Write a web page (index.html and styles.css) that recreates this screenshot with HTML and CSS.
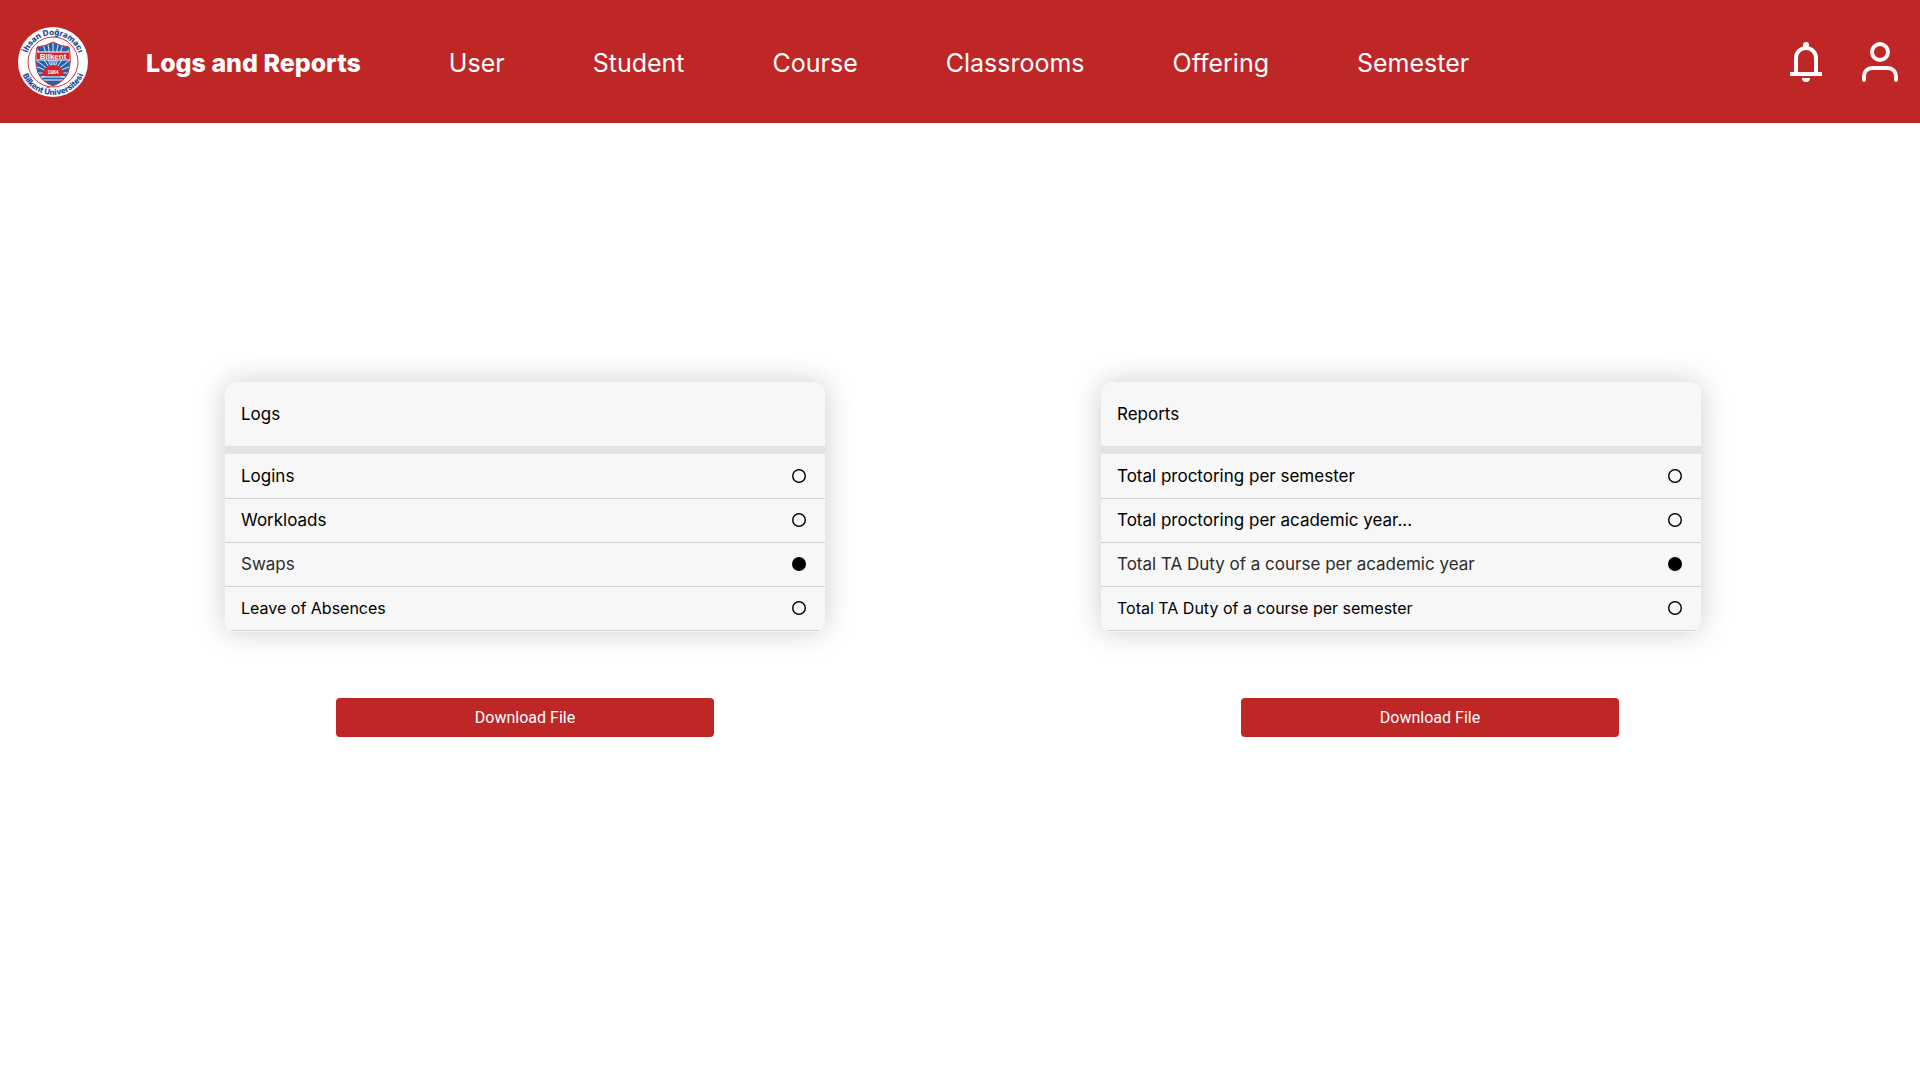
FILE: index.html
```html
<!DOCTYPE html>
<html lang="en">
<head>
<meta charset="utf-8">
<meta name="viewport" content="width=device-width, initial-scale=1">
<title>Logs and Reports</title>
<link rel="stylesheet" href="styles.css">
</head>
<body>
<header class="topbar">
  <a class="logo" href="#" aria-label="Home">
    <svg viewBox="0 0 70 70" width="70" height="70">
      <defs>
        <path id="arc-top" d="M8 35a27 27 0 0 1 54 0"/>
        <path id="arc-bottom" d="M2 35a33 33 0 0 0 66 0"/>
        <clipPath id="shield"><path d="M19 20q9-1 16-5q7 4 16 5q3 15-1 26q-4 9-15 13q-11-4-15-13q-4-11-1-26z"/></clipPath>
      </defs>
      <circle cx="35" cy="35" r="35" fill="#fff"/>
      <circle cx="35" cy="35" r="25" fill="none" stroke="#c73a40" stroke-width="1"/>
      <g clip-path="url(#shield)">
        <rect x="15" y="12" width="40" height="48" fill="#2860a8"/>
        <path stroke="#dbe8f5" stroke-width="1" d="M35 46V12M35 46L29 12M35 46L23 12M35 46L41 12M35 46L47 12M35 46L16 18M35 46L54 18M35 46L14 30M35 46L56 30M35 46L14 38M35 46L56 38M35 46H14M35 46h21M35 46L14 54M35 46L56 54"/>
        <path fill="#d4232b" d="M24 49a11 11 0 0 1 22 0z"/>
        <path stroke="#fff" stroke-width="1" d="M20 50h30M22 53h26"/>
        <rect x="18" y="25" width="34" height="8" fill="#d4232b" stroke="#fff" stroke-width="1"/>
      </g>
      <path d="M19 20q9-1 16-5q7 4 16 5q3 15-1 26q-4 9-15 13q-11-4-15-13q-4-11-1-26z" fill="none" stroke="#c9363d" stroke-width="1"/>
      <text class="logo-name" x="35" y="32" text-anchor="middle">Bilkent</text>
      <text class="logo-year" x="35" y="47" text-anchor="middle">1984</text>
      <text class="logo-ring"><textPath href="#arc-top" startOffset="50%" text-anchor="middle">İhsan Doğramacı</textPath></text>
      <text class="logo-ring"><textPath href="#arc-bottom" startOffset="50%" text-anchor="middle">Bilkent Üniversitesi</textPath></text>
    </svg>
  </a>
  <nav class="nav">
    <a class="nav-link active" href="#" aria-current="page">Logs and Reports</a>
    <a class="nav-link" href="#">User</a>
    <a class="nav-link" href="#">Student</a>
    <a class="nav-link" href="#">Course</a>
    <a class="nav-link" href="#">Classrooms</a>
    <a class="nav-link" href="#">Offering</a>
    <a class="nav-link" href="#">Semester</a>
  </nav>
  <div class="actions">
    <button class="icon-button" type="button" aria-label="Notifications">
      <svg viewBox="0 0 32 40" width="32" height="40">
        <path fill="#fff" d="M16 0a3 3 0 0 1 3 3v2h-6V3a3 3 0 0 1 3-3zM12 36h8a4 4 0 0 1-8 0zM0 30h32v4H0z"/>
        <path fill="none" stroke="#fff" stroke-width="4" d="M6 32V16a10 10 0 0 1 20 0v16"/>
      </svg>
    </button>
    <button class="icon-button" type="button" aria-label="Profile">
      <svg viewBox="0 0 36 40" width="36" height="40" fill="none" stroke="#f6f6f6" stroke-width="4">
        <circle cx="18" cy="10" r="8"/>
        <path stroke-linecap="round" d="M2 38v-4a8 8 0 0 1 8-8h16a8 8 0 0 1 8 8v4"/>
      </svg>
    </button>
  </div>
</header>
<main class="content">
  <form class="panel">
    <fieldset class="card">
      <legend class="card-title">Logs</legend>
      <div class="options">
        <label class="option">Logins<input class="radio" type="radio" name="log"></label>
        <label class="option">Workloads<input class="radio" type="radio" name="log"></label>
        <label class="option">Swaps<input class="radio" type="radio" name="log" checked></label>
        <label class="option compact">Leave of Absences<input class="radio" type="radio" name="log"></label>
      </div>
    </fieldset>
    <button class="download" type="button">Download File</button>
  </form>
  <form class="panel reports">
    <fieldset class="card">
      <legend class="card-title">Reports</legend>
      <div class="options">
        <label class="option">Total proctoring per semester<input class="radio" type="radio" name="report"></label>
        <label class="option">Total proctoring per academic year...<input class="radio" type="radio" name="report"></label>
        <label class="option">Total TA Duty of a course per academic year<input class="radio" type="radio" name="report" checked></label>
        <label class="option compact">Total TA Duty of a course per semester<input class="radio" type="radio" name="report"></label>
      </div>
    </fieldset>
    <button class="download" type="button">Download File</button>
  </form>
</main>
</body>
</html>
```
FILE: styles.css
```css
* {
  box-sizing: border-box;
}

body {
  margin: 0;
  background: #fff;
  color: #000;
  font-family: Inter, "Liberation Sans", sans-serif;
}

.topbar {
  display: flex;
  align-items: center;
  min-height: 123px;
  padding: 0 22px 0 18px;
  background: #bf2626;
}

.logo {
  display: block;
  height: 70px;
}

.logo-ring {
  fill: #1a4a96;
  font: 800 8px Inter, sans-serif;
}

.logo-name {
  fill: #fff;
  font: bold 8px "Liberation Sans", sans-serif;
}

.logo-year {
  fill: #fff;
  font: bold 5px "Liberation Sans", sans-serif;
}

.nav {
  display: flex;
  gap: 88px;
  margin-left: 58px;
  padding-top: 2px;
}

.nav-link {
  color: #fff;
  font-size: 25px;
  line-height: 32px;
  text-decoration: none;
  white-space: nowrap;
}

.nav-link.active {
  font-weight: 800;
}

.actions {
  display: flex;
  gap: 40px;
  margin-left: auto;
}

.icon-button {
  display: block;
  padding: 0;
  border: 0;
  background: none;
  cursor: pointer;
}

.icon-button svg {
  display: block;
}

.content {
  display: grid;
  grid-template-columns: 1fr 1fr;
  gap: 276px;
  padding: 259px 219px 40px 225px;
}

.card {
  min-width: 0;
  margin: 0;
  padding: 0;
  border: 0;
  border-radius: 12px;
  overflow: hidden;
  background: #f7f7f7;
  box-shadow: 0 0 30px rgba(0, 0, 0, 0.2);
}

.card-title {
  float: left;
  width: 100%;
  padding: 20px 16px;
  border-bottom: 8px solid #e3e3e3;
  font-size: 17px;
  line-height: 24px;
}

.options {
  clear: both;
  padding-bottom: 1px;
}

.option {
  display: flex;
  align-items: center;
  justify-content: space-between;
  min-height: 44px;
  padding: 0 19px 0 16px;
  font-size: 17px;
  line-height: 24px;
  box-shadow: 0 1px #d2d2d2;
}

.option.compact {
  margin-bottom: 1px;
  font-size: 16px;
}

.option:has(:checked) {
  color: #2c2c2c;
}

.radio {
  appearance: none;
  width: 14px;
  height: 14px;
  margin: 0;
  border-radius: 50%;
  background: radial-gradient(circle, transparent 5px, #000 6px);
}

.radio:checked {
  background: #000;
}

.download {
  display: block;
  width: 63%;
  height: 39px;
  margin: 66px auto 0;
  border: 0;
  border-radius: 4px;
  background: #bf2626;
  color: #fff;
  font-family: Roboto, sans-serif;
  font-size: 16px;
  cursor: pointer;
}

.reports .download {
  margin-left: 140px;
}
```
